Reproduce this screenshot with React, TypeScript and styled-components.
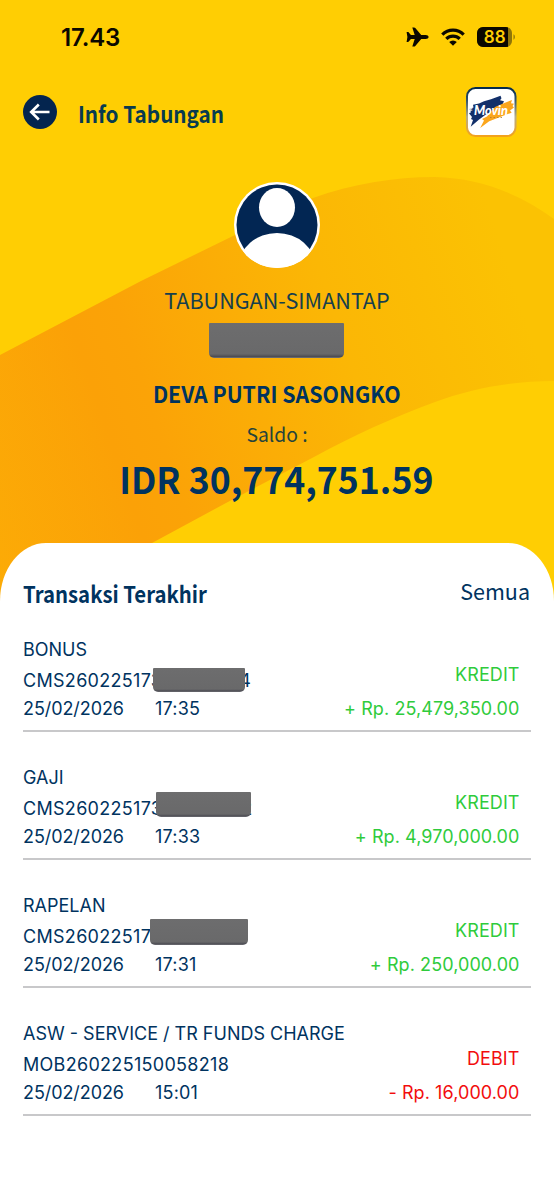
import React from "react";
import styled, { createGlobalStyle } from "styled-components";

const NAVY = "#00335f";
const SOURCE = `"Noto Sans CJK SC", "Noto Sans", sans-serif`;
const INTER = `Inter, "Liberation Sans", sans-serif`;

const GlobalStyle = createGlobalStyle`
  * { box-sizing: border-box; }
  html, body { margin: 0; padding: 0; background: #fff; }
  body { font-family: ${INTER}; color: ${NAVY}; }
`;

const Screen = styled.main`
  display: flex;
  flex-direction: column;
  width: 554px;
  height: 1200px;
  overflow: hidden;
  position: relative;
  isolation: isolate;
  background: #ffce03;
`;

const Backdrop = styled.svg`
  position: absolute;
  inset: 0;
  z-index: -1;
`;

const StatusBar = styled.div`
  display: flex;
  justify-content: space-between;
  align-items: center;
  height: 74px;
  padding: 0 38px 0 61px;
`;

const Clock = styled.span`
  margin-top: 2px;
  font: 600 24px/28px ${INTER};
  letter-spacing: -0.15px;
  color: #0b0800;
`;

const StatusIcons = styled.div`
  display: flex;
  align-items: center;
  gap: 12px;
`;

const Header = styled.header`
  display: flex;
  align-items: center;
  height: 76px;
  padding: 0 37px 0 23px;
`;

const BackButton = styled.button`
  width: 34px;
  height: 34px;
  padding: 0;
  border: 0;
  background: none;
  display: block;
`;

const HeaderTitle = styled.h1`
  flex: 1;
  margin: 2px 0 0 21px;
  font: 700 23px/30px ${SOURCE};
  color: #083b50;
  transform: scaleX(0.9);
  transform-origin: left;
`;

const Account = styled.section`
  display: flex;
  flex-direction: column;
  align-items: center;
  height: 393px;
  padding-top: 32px;
`;

const AccountType = styled.div`
  margin-top: 16px;
  font: 400 21.6px/32px ${SOURCE};
  color: #163f4d;
`;

const Redaction = styled.div<{ $w: number; $h: number }>`
  width: ${(p) => p.$w}px;
  height: ${(p) => p.$h}px;
  border-radius: 1px 1px 5px 5px;
  background: linear-gradient(#6d6d6e 0, #69696a 88%, #4d4d54 96%, #77777c 100%);
`;

const AccountMask = styled(Redaction)`
  margin: 7px 2px 0 0;
`;

const Owner = styled.div`
  margin-top: 19px;
  font: 700 23px/32px ${SOURCE};
  color: ${NAVY};
  transform: scaleX(0.926);
`;

const BalanceLabel = styled.div`
  margin-top: 11px;
  font: 400 19.3px/28px ${SOURCE};
  color: #25433c;
`;

const Balance = styled.div`
  margin-top: 5px;
  font: 700 37px/50px ${SOURCE};
  color: ${NAVY};
  transform: translateX(-1px) scaleX(0.962);
`;

const Card = styled.section`
  flex: 1;
  padding: 32px 23px 0;
  background: #fff;
  border-radius: 46px 46px 0 0 / 58px 58px 0 0;
`;

const CardHeader = styled.div`
  display: flex;
  justify-content: space-between;
  height: 52px;
`;

const CardTitle = styled.h2`
  margin: 2px 0 0;
  font: 700 23px/32px ${SOURCE};
  transform: scaleX(0.885);
  transform-origin: left;
`;

const AllLink = styled.a`
  margin-right: 1px;
  font: 400 21.5px/32px ${SOURCE};
`;

const Transaction = styled.article`
  display: flex;
  justify-content: space-between;
  height: 105px;
  margin-bottom: 23px;
  padding: 12px 12px 0 0;
  border-bottom: 2px solid #c8c8ca;
  font: 400 18px/22px ${INTER};
`;

const Details = styled.div`
  display: flex;
  flex-direction: column;
`;

const Reference = styled.div`
  position: relative;
  margin: 9px 0 6px;
  white-space: nowrap;
  letter-spacing: 0.3px;
`;

const HiddenDigits = styled.span<{ $w: number }>`
  display: inline-block;
  width: ${(p) => p.$w}px;
`;

const ReferenceMask = styled(Redaction)<{ $x: number; $y: number }>`
  position: absolute;
  left: ${(p) => p.$x}px;
  top: ${(p) => p.$y}px;
`;

const When = styled.div`
  display: flex;
`;

const DateText = styled.span`
  width: 132px;
  letter-spacing: -0.08px;
`;

const TimeText = styled.span`
  letter-spacing: 0.2px;
`;

const Amount = styled.div<{ $debit?: boolean }>`
  display: flex;
  flex-direction: column;
  align-items: flex-end;
  gap: 12px;
  padding-top: 25px;
  margin-right: -0.5px;
  letter-spacing: 0.08px;
  color: ${(p) => (p.$debit ? "#f20d0d" : "#2fcb3c")};
`;

interface Entry {
  title: string;
  reference: string;
  tail?: string;
  gap?: number;
  mask?: { x: number; y: number; w: number; h: number };
  time: string;
  amount: string;
  debit?: boolean;
}

const entries: Entry[] = [
  { title: "BONUS", reference: "CMS260225173", tail: "4", gap: 77, mask: { x: 130, y: -2, w: 92, h: 24 }, time: "17:35", amount: "+ Rp. 25,479,350.00" },
  { title: "GAJI", reference: "CMS260225173", tail: "2", gap: 79, mask: { x: 133, y: -6, w: 95, h: 25 }, time: "17:33", amount: "+ Rp. 4,970,000.00" },
  { title: "RAPELAN", reference: "CMS26022517", mask: { x: 127, y: -7, w: 98, h: 26 }, time: "17:31", amount: "+ Rp. 250,000.00" },
  { title: "ASW - SERVICE / TR FUNDS CHARGE", reference: "MOB260225150058218", time: "15:01", amount: "- Rp. 16,000.00", debit: true },
];

const Wave = () => (
  <Backdrop width="554" height="620" viewBox="0 0 554 620">
    <defs>
      <linearGradient id="wave" gradientUnits="userSpaceOnUse" x1="-50" y1="490" x2="520" y2="300">
        <stop offset="0" stopColor="#fcac06" />
        <stop offset="0.28" stopColor="#fba107" />
        <stop offset="0.36" stopColor="#fba307" />
        <stop offset="0.7" stopColor="#fbb705" />
        <stop offset="1" stopColor="#fbc203" />
      </linearGradient>
    </defs>
    <path
      fill="url(#wave)"
      d="M0 355 L141 281 L235 235 C262 220 288 207 313 198 C352 184 394 177 435 177 C480 178 520 194 554 219 V381 C510 381 470 389 435 402 C392 418 354 435 314 457 L226 503 L152 543 L60 596 V620 H0Z"
    />
  </Backdrop>
);

const Airplane = () => (
  <svg width="23" height="20" viewBox="0 0 23 20">
    <path
      fill="#0b0800"
      d="M22.6 10c0 1.200-1.400 2-2.800 2h-4.600L9.300 19c-.3.4-.7.600-1.200.6H6.300l2.400-7.600H4.900L2.800 14.600c-.2.3-.5.4-.9.400H.6L1.400 10 .6 5h1.300c.4 0 .7.100.9.400L4.900 8h3.800L6.300.4h1.800c.5 0 .9.200 1.200.6L15.200 8h4.600c1.400 0 2.800.8 2.800 2z"
    />
  </svg>
);

const Wifi = () => (
  <svg width="24" height="18" viewBox="0 0 24 18">
    <g fill="none" stroke="#0b0800" strokeWidth="3.200">
      <path d="M1.300 6.600a15.200 15.200 0 0 1 21.400 0" />
      <path d="M5.300 10.800a9.500 9.500 0 0 1 13.400 0" />
    </g>
    <path fill="#0b0800" d="M12 17.800 8.200 14a5.400 5.400 0 0 1 7.600 0z" />
  </svg>
);

const Battery = () => (
  <svg width="39" height="20" viewBox="0 0 39 20">
    <defs>
      <clipPath id="charge">
        <rect width="35" height="20" rx="6" />
      </clipPath>
    </defs>
    <g clipPath="url(#charge)">
      <rect width="35" height="20" fill="#8f7508" />
      <rect width="31" height="20" fill="#0b0800" />
    </g>
    <path d="M36.500 7.300c1.800.7 1.800 4.700 0 5.400z" fill="#8f7508" />
    <text x="17.700" y="16" textAnchor="middle" fontFamily="Inter" fontWeight="600" fontSize="17" fill="#ffce03">
      88
    </text>
  </svg>
);

const BackArrow = () => (
  <svg width="34" height="34" viewBox="0 0 34 34">
    <circle cx="17" cy="17" r="17" fill="#04254f" />
    <path d="M26.500 17H8.500M15.800 9.500 8.200 17l7.600 7.500" fill="none" stroke="#fff" strokeWidth="2.600" />
  </svg>
);

const Logo = () => (
  <svg width="52" height="52" viewBox="0 0 52 52">
    <defs>
      <linearGradient id="frame" x2="0" y2="1">
        <stop offset="0" stopColor="#032a4e" />
        <stop offset="0.25" stopColor="#31526a" />
        <stop offset="0.6" stopColor="#b5ad8a" />
        <stop offset="1" stopColor="#f3a21b" />
      </linearGradient>
    </defs>
    <rect x="2" y="2" width="48.500" height="48" rx="8.500" fill="#fff" stroke="url(#frame)" strokeWidth="2" />
    <path
      fill="#12306a"
      d="M8 18.700l6-1.200 5-2.200 7-2 9.500-3.500 1 2.400-1.500 2 4 1-1.500 3-7 5.500-10 5-6.700 5L5.700 40.700 8 34l-2-1 1-2-3-3.700 2-1L4.500 23l4-1.500z"
    />
    <path
      fill="#fba61c"
      d="M30 21l7-3 10-4-1 3.300 3 .5-1.500 2.200 1.500 1.500-4 3 1.700 2.300-6 2-7.500 3-9 3.500-9 6.700 3.800-7.400L17 33l5-2.500z"
    />
    <text
      x="9"
      y="28.500"
      textLength="34"
      lengthAdjust="spacingAndGlyphs"
      fontFamily="Lato"
      fontStyle="italic"
      fontWeight="900"
      fontSize="12.500"
      fill="#fff"
    >
      Movin
    </text>
    <text x="4.500" y="25" fontFamily="Lato" fontStyle="italic" fontWeight="700" fontSize="6" fill="#fff">
      e
    </text>
    <path d="M25 31.500h13" stroke="#a87a30" strokeWidth="0.800" strokeDasharray="1.500 2" />
  </svg>
);

const Avatar = () => (
  <svg width="86" height="86" viewBox="0 0 86 86">
    <defs>
      <clipPath id="face">
        <circle cx="43" cy="43" r="43" />
      </clipPath>
    </defs>
    <circle cx="43" cy="43" r="43" fill="#fff" />
    <circle cx="43" cy="43" r="40.500" fill="#022653" />
    <g clipPath="url(#face)" fill="#fff">
      <ellipse cx="43" cy="25.500" rx="18" ry="19.500" />
      <ellipse cx="43" cy="84" rx="38" ry="33" />
    </g>
  </svg>
);

export default function App() {
  return (
    <>
      <GlobalStyle />
      <Screen>
        <Wave />
        <StatusBar>
          <Clock>17.43</Clock>
          <StatusIcons>
            <Airplane />
            <Wifi />
            <Battery />
          </StatusIcons>
        </StatusBar>
        <Header>
          <BackButton aria-label="Kembali">
            <BackArrow />
          </BackButton>
          <HeaderTitle>Info Tabungan</HeaderTitle>
          <Logo />
        </Header>
        <Account>
          <Avatar />
          <AccountType>TABUNGAN-SIMANTAP</AccountType>
          <AccountMask $w={135} $h={35} />
          <Owner>DEVA PUTRI SASONGKO</Owner>
          <BalanceLabel>Saldo :</BalanceLabel>
          <Balance>IDR 30,774,751.59</Balance>
        </Account>
        <Card>
          <CardHeader>
            <CardTitle>Transaksi Terakhir</CardTitle>
            <AllLink>Semua</AllLink>
          </CardHeader>
          {entries.map((e) => (
            <Transaction key={e.title}>
              <Details>
                <span>{e.title}</span>
                <Reference>
                  {e.reference}
                  {e.tail && <HiddenDigits $w={e.gap ?? 0} />}
                  {e.tail}
                  {e.mask && <ReferenceMask $x={e.mask.x} $y={e.mask.y} $w={e.mask.w} $h={e.mask.h} />}
                </Reference>
                <When>
                  <DateText>25/02/2026</DateText>
                  <TimeText>{e.time}</TimeText>
                </When>
              </Details>
              <Amount $debit={e.debit}>
                <span>{e.debit ? "DEBIT" : "KREDIT"}</span>
                <span>{e.amount}</span>
              </Amount>
            </Transaction>
          ))}
        </Card>
      </Screen>
    </>
  );
}
